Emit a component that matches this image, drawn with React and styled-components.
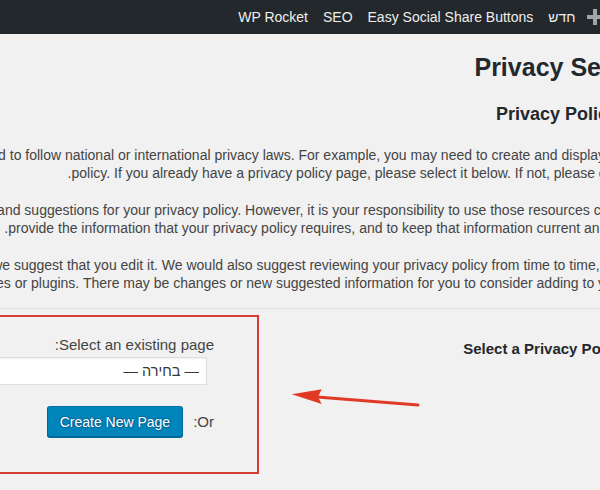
import React from 'react'
import styled, { createGlobalStyle } from 'styled-components'

const GlobalStyle = createGlobalStyle`
  html, body {
    margin: 0;
    padding: 0;
    overflow: hidden;
    background: #f1f1f1;
  }
  body {
    font-family: "Liberation Sans", Arial, sans-serif;
  }
`

const Page = styled.div`
  direction: rtl;
  width: 680px;
  height: 490px;
  background: #f1f1f1;
  color: #444;
  font-size: 14px;
`

const AdminBar = styled.div`
  display: flex;
  align-items: center;
  height: 34px;
  padding-right: 70px;
  background: #23282d;
`

const BarItem = styled.a`
  display: flex;
  align-items: center;
  gap: 11px;
  padding: 0 7.5px;
  color: #eee;
  font-size: 14px;
  line-height: 34px;
  text-decoration: none;
  white-space: nowrap;
`

const Wrap = styled.div`
  padding: 17px 15px 0 0;
`

const Title = styled.h1`
  margin: 0 -4px 0 0;
  font-size: 25px;
  font-weight: 700;
  line-height: 32px;
  color: #23282d;
  white-space: nowrap;
`

const Subtitle = styled.h2`
  margin: 19px 0 0;
  font-size: 18px;
  font-weight: 700;
  line-height: 24px;
  color: #23282d;
  white-space: nowrap;
`

const Text = styled.p`
  margin: ${p => (p.$first ? 20 : 19)}px 0 0;
  line-height: 18px;
  white-space: nowrap;
`

const Divider = styled.hr`
  margin: 16px 0 0;
  height: 0;
  border: 0;
  border-top: 1px solid #ddd;
`

const FormRow = styled.div`
  position: relative;
  display: flex;
  align-items: flex-start;
  margin-top: 6px;
`

const RowLabel = styled.div`
  flex: none;
  width: 200px;
  padding-top: 24px;
  font-size: 15px;
  font-weight: 700;
  line-height: 20px;
  color: #23282d;
  white-space: nowrap;
`

const Highlight = styled.div`
  flex: none;
  width: 400px;
  margin-right: 206px;
  padding: 19px 43px 35px 0;
  border: 2px solid #d63c32;
  font-size: 15px;
`

const FieldLabel = styled.label`
  display: block;
  line-height: 18px;
  white-space: nowrap;
`

const PageSelect = styled.select`
  display: block;
  box-sizing: border-box;
  width: 280px;
  height: 28px;
  margin: 3px 7px 0 0;
  padding: 0 7px;
  appearance: none;
  border: 1px solid #ddd;
  border-radius: 0;
  box-shadow: inset 0 1px 2px rgba(0, 0, 0, 0.07);
  background: #fff;
  color: #32373c;
  font-family: "Liberation Sans", Arial, sans-serif;
  font-size: 14.5px;
`

const OrRow = styled.div`
  display: flex;
  align-items: center;
  gap: 10px;
  margin-top: 21px;
`

const PrimaryButton = styled.button`
  box-sizing: border-box;
  height: 31px;
  padding: 0 12px;
  border: 1px solid;
  border-color: #0073aa #006799 #006799;
  border-radius: 3px;
  box-shadow: 0 1px 0 #006799;
  background: #0085ba;
  color: #fff;
  font-family: "Liberation Sans", Arial, sans-serif;
  font-size: 14px;
  text-shadow: 0 -1px 1px #006799, 1px 0 1px #006799, 0 1px 1px #006799, -1px 0 1px #006799;
  white-space: nowrap;
`

const Arrow = styled.svg`
  position: absolute;
  left: 288px;
  top: 71px;
`

const PlusIcon = () => (
  <svg width="16" height="16" viewBox="0 0 16 16">
    <rect x="0" y="6" width="16" height="4" fill="#a0a5aa" />
    <rect x="6" y="0" width="4" height="16" fill="#a0a5aa" />
  </svg>
)

export default function App() {
  return (
    <>
      <GlobalStyle />
      <Page>
        <AdminBar>
          <BarItem href="#">
            <PlusIcon />
            <span>חדש</span>
          </BarItem>
          <BarItem href="#">Easy Social Share Buttons</BarItem>
          <BarItem href="#">SEO</BarItem>
          <BarItem href="#">WP Rocket</BarItem>
        </AdminBar>
        <Wrap>
          <Title>Privacy Settings</Title>
          <Subtitle>Privacy Policy page</Subtitle>
          <Text $first>
            As a website owner, you may need to follow national or international privacy laws. For example, you may need to create and display a privacy
            <br />
            policy. If you already have a privacy policy page, please select it below. If not, please create one.
          </Text>
          <Text>
            The new page will include help and suggestions for your privacy policy. However, it is your responsibility to use those resources correctly, to
            <br />
            provide the information that your privacy policy requires, and to keep that information current and accurate.
          </Text>
          <Text>
            After your Privacy Policy page is set, we suggest that you edit it. We would also suggest reviewing your privacy policy from time to time, especially
            <br />
            after installing or updating any themes or plugins. There may be changes or new suggested information for you to consider adding to your policy.
          </Text>
          <Divider />
          <FormRow>
            <RowLabel>Select a Privacy Policy page</RowLabel>
            <Highlight>
              <FieldLabel htmlFor="page_for_privacy_policy">Select an existing page:</FieldLabel>
              <PageSelect id="page_for_privacy_policy" defaultValue="0">
                <option value="0">— בחירה —</option>
              </PageSelect>
              <OrRow>
                <span>Or:</span>
                <PrimaryButton type="button">Create New Page</PrimaryButton>
              </OrRow>
            </Highlight>
            <Arrow width="134" height="22" viewBox="0 0 134 22">
              <line x1="29" y1="11" x2="130" y2="19" stroke="#e03a27" strokeWidth="3" strokeLinecap="round" />
              <polygon points="3.7,8.3 33.7,3.3 30,11 33.7,18" fill="#e03a27" />
            </Arrow>
          </FormRow>
        </Wrap>
      </Page>
    </>
  )
}
